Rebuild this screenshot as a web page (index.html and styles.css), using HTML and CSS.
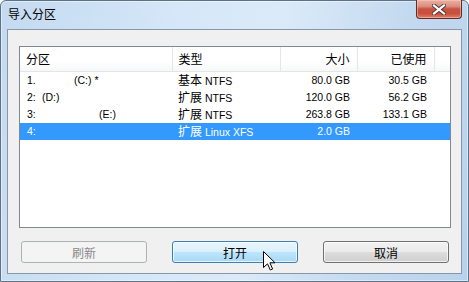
FILE: index.html
```html
<!DOCTYPE html>
<html lang="zh-CN">
<head>
    <meta charset="UTF-8">
    <title>导入分区</title>
    <link rel="stylesheet" href="styles.css">
</head>
<body>
    <div class="window">
        <div class="titlebar">
            <span class="title">导入分区</span>
            <button class="close-button" title="关闭">
                <svg width="14" height="11" viewBox="0 0 14 11">
                    <path d="M2 1.5 L12 9.5 M12 1.5 L2 9.5" stroke="#4a3a3a" stroke-width="4" stroke-linecap="square"/>
                    <path d="M2 1.5 L12 9.5 M12 1.5 L2 9.5" stroke="#ffffff" stroke-width="2.2" stroke-linecap="square"/>
                </svg>
            </button>
        </div>

        <div class="panel">
            <div class="list">
                <table class="partitions">
                    <thead>
                        <tr>
                            <th class="col-name"><span class="cjk">分区</span></th>
                            <th class="col-type"><span class="cjk">类型</span></th>
                            <th class="col-size num"><span class="cjk">大小</span></th>
                            <th class="col-used num"><span class="cjk">已使用</span></th>
                            <th class="col-fill"></th>
                        </tr>
                    </thead>
                    <tbody>
                        <tr>
                            <td><span class="index">1.</span><span class="label label-c"></span>(C:) *</td>
                            <td><span class="cjk">基本</span> NTFS</td>
                            <td class="num">80.0 GB</td>
                            <td class="num">30.5 GB</td>
                            <td></td>
                        </tr>
                        <tr>
                            <td><span class="index">2:</span><span class="label label-d"></span>(D:)</td>
                            <td><span class="cjk">扩展</span> NTFS</td>
                            <td class="num">120.0 GB</td>
                            <td class="num">56.2 GB</td>
                            <td></td>
                        </tr>
                        <tr>
                            <td><span class="index">3:</span><span class="label label-e"></span>(E:)</td>
                            <td><span class="cjk">扩展</span> NTFS</td>
                            <td class="num">263.8 GB</td>
                            <td class="num">133.1 GB</td>
                            <td></td>
                        </tr>
                        <tr class="selected">
                            <td><span class="index">4:</span></td>
                            <td><span class="cjk">扩展</span> Linux XFS</td>
                            <td class="num">2.0 GB</td>
                            <td class="num"></td>
                            <td></td>
                        </tr>
                    </tbody>
                </table>
            </div>

            <div class="actions">
                <button class="btn" disabled>刷新</button>
                <button class="btn btn-hover">打开</button>
                <button class="btn">取消</button>
            </div>
        </div>

        <svg class="cursor" width="13" height="20" viewBox="0 0 13 20">
            <path d="M0.5 0.5 L0.5 16.5 L4.5 12.8 L7.3 19 L9.6 18 L6.9 11.8 L12 11.8 Z" fill="#ffffff" stroke="#000000" stroke-width="1" stroke-linejoin="round"/>
        </svg>
    </div>
</body>
</html>
```

FILE: styles.css
```css
body {
    margin: 0;
    background: #ffffff;
    font-family: 'Liberation Sans', 'Noto Sans CJK SC', sans-serif;
}

.window {
    position: relative;
    width: 469px;
    height: 282px;
    box-sizing: border-box;
    border: 1px solid #5f7186;
    border-radius: 6px 6px 0 0;
    padding: 0 6px 7px;
    display: flex;
    flex-direction: column;
    background: linear-gradient(100deg, #c4daf0 0%, #d5e7f8 35%, #dbeaf8 55%, #c3d9f0 80%, #b9d2ec 100%);
    box-shadow: inset 0 0 0 1px rgba(255, 255, 255, 0.45);
}

.titlebar {
    height: 28px;
    display: flex;
    align-items: flex-start;
}

.title {
    margin-left: 1px;
    margin-top: 5px;
    font-family: 'Noto Sans CJK SC', sans-serif;
    font-size: 12px;
    line-height: 16px;
    color: #000;
}

.close-button {
    margin-left: auto;
    margin-top: -1px;
    width: 46px;
    height: 19px;
    padding: 0;
    border: 1px solid #5e2b26;
    border-top: none;
    border-radius: 0 0 4px 4px;
    background: linear-gradient(to bottom, #eab0a2 0%, #dc8f7d 35%, #c65341 50%, #c8503c 75%, #e07e62 100%);
    box-shadow: inset 0 0 0 1px rgba(255, 210, 200, 0.5);
    display: flex;
    align-items: center;
    justify-content: center;
}

.panel {
    flex: 1;
    border: 1px solid #8796a8;
    background: #f0f0f0;
    padding: 16px 10px 10px 11px;
    display: flex;
    flex-direction: column;
}

.list {
    height: 182px;
    box-sizing: border-box;
    border: 1px solid #828790;
    background: #ffffff;
    overflow: hidden;
}

.partitions {
    border-collapse: collapse;
    table-layout: fixed;
    width: 430px;
    font-size: 10.5px;
    color: #000;
}

.partitions th,
.partitions td {
    box-sizing: border-box;
    white-space: nowrap;
    overflow: hidden;
}

.partitions th {
    height: 24px;
    padding: 0 6px;
    font-weight: normal;
    text-align: left;
    border-right: 1px solid #e5e5e5;
    border-bottom: 1px solid #e5e5e5;
    background: linear-gradient(to bottom, #ffffff 0%, #ffffff 60%, #f6f7f8 100%);
}

.partitions th.col-fill {
    border-right: none;
}

.col-name { width: 152px; }
.col-type { width: 108px; }
.col-size { width: 77px; }
.col-used { width: 77px; }
.col-fill { width: 16px; }

.partitions td {
    height: 16px;
    line-height: 16px;
    padding: 0 6px;
}

.partitions .num {
    text-align: right;
    padding-right: 7px;
}

.cjk {
    font-family: 'Noto Sans CJK SC', sans-serif;
    font-size: 12px;
    line-height: 16px;
}

.index {
    display: inline-block;
    width: 12px;
    padding-left: 1px;
}

.label {
    display: inline-block;
}

.label-c { width: 35px; }
.label-d { width: 3px; }
.label-e { width: 60px; }

.selected td {
    background: #3399ff;
    color: #ffffff;
}

.actions {
    margin-top: 13px;
    padding: 0 2px;
    display: flex;
    justify-content: space-between;
}

.btn {
    width: 126px;
    height: 22px;
    padding: 0;
    border: 1px solid #707070;
    border-radius: 3px;
    font-family: 'Noto Sans CJK SC', sans-serif;
    font-size: 12px;
    color: #000;
    background: linear-gradient(to bottom, #f2f2f2 0%, #ebebeb 49%, #dddddd 50%, #cfcfcf 100%);
    box-shadow: inset 0 0 0 1px rgba(255, 255, 255, 0.7);
}

.btn:disabled {
    border-color: #adb2b5;
    background: #f4f4f4;
    color: #8a8a8a;
    box-shadow: none;
}

.btn-hover {
    border-color: #3c7fb1;
    background: linear-gradient(to bottom, #eaf6fd 0%, #d9f0fc 49%, #bee6fd 50%, #a7d9f5 100%);
}

.cursor {
    position: absolute;
    left: 262px;
    top: 250px;
}
```
